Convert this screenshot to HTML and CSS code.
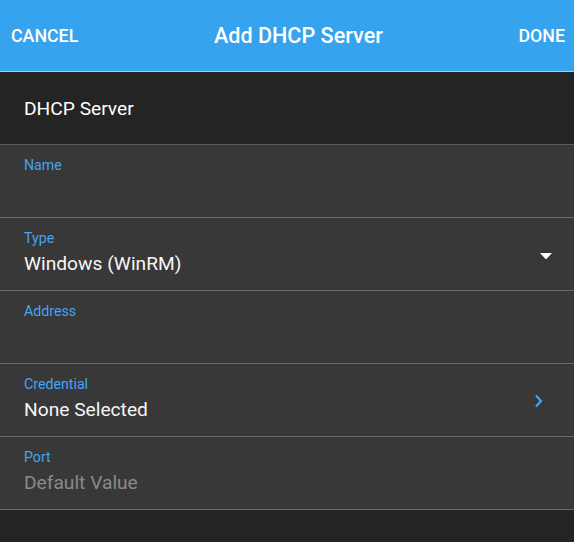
FILE: index.html
```html
<!DOCTYPE html>
<html>
<head>
<meta charset="utf-8">
<link rel="stylesheet" href="styles.css">
</head>
<body>
<div class="app">
  <header class="topbar">
    <span class="btn">CANCEL</span>
    <span class="title">Add DHCP Server</span>
    <span class="btn">DONE</span>
  </header>
  <div class="section">DHCP Server</div>
  <div class="row">
    <div class="field">
      <div class="label">Name</div>
      <div class="value"></div>
    </div>
  </div>
  <div class="row">
    <div class="field">
      <div class="label">Type</div>
      <div class="value">Windows (WinRM)</div>
    </div>
    <svg class="caret" width="12" height="7" viewBox="0 0 12 7"><path d="M0 0 L12 0 L6 6.5 Z" fill="#ffffff"/></svg>
  </div>
  <div class="row">
    <div class="field">
      <div class="label">Address</div>
      <div class="value"></div>
    </div>
  </div>
  <div class="row">
    <div class="field">
      <div class="label">Credential</div>
      <div class="value">None Selected</div>
    </div>
    <svg class="chev" width="10" height="14" viewBox="0 0 10 14"><path d="M2 1.5 L7 7 L2 12.5" fill="none" stroke="#42a5f5" stroke-width="2.2"/></svg>
  </div>
  <div class="row">
    <div class="field">
      <div class="label">Port</div>
      <div class="value placeholder">Default Value</div>
    </div>
  </div>
</div>
</body>
</html>
```
FILE: styles.css
```css
* { box-sizing: border-box; }
html, body { margin: 0; padding: 0; }
body {
  background: #242424;
  font-family: Roboto, "Liberation Sans", sans-serif;
  color: #ffffff;
  width: 574px;
  height: 542px;
  overflow: hidden;
}
.topbar {
  height: 72px;
  background: #36a3ee;
  border-bottom: 1px solid #c4c4c4;
  display: flex;
  align-items: center;
  padding: 0 9px 0 11px;
}
.btn {
  font-size: 17.8px;
  font-weight: 500;
}
.title {
  flex: 1;
  text-align: center;
  font-size: 21.6px;
  font-weight: 500;
}
.section {
  height: 73px;
  display: flex;
  align-items: center;
  padding-left: 24px;
  font-size: 19.2px;
  border-bottom: 1px solid #5e5e5e;
}
.row {
  height: 73px;
  background: #383838;
  border-bottom: 1px solid #6a6a6a;
  display: flex;
  align-items: flex-start;
  justify-content: space-between;
  padding: 12px 24px 0 24px;
}
.field { display: flex; flex-direction: column; }
.label {
  font-size: 14.2px;
  line-height: 16px;
  color: #42a5f5;
}
.value {
  font-size: 19.2px;
  line-height: 24px;
  margin-top: 6px;
  color: #f6f6f6;
  min-height: 24px;
}
.value.placeholder { color: #8a8a8a; }
.caret { margin-top: 23px; margin-right: -2px; }
.chev { margin-top: 18px; margin-right: 6px; }
```
